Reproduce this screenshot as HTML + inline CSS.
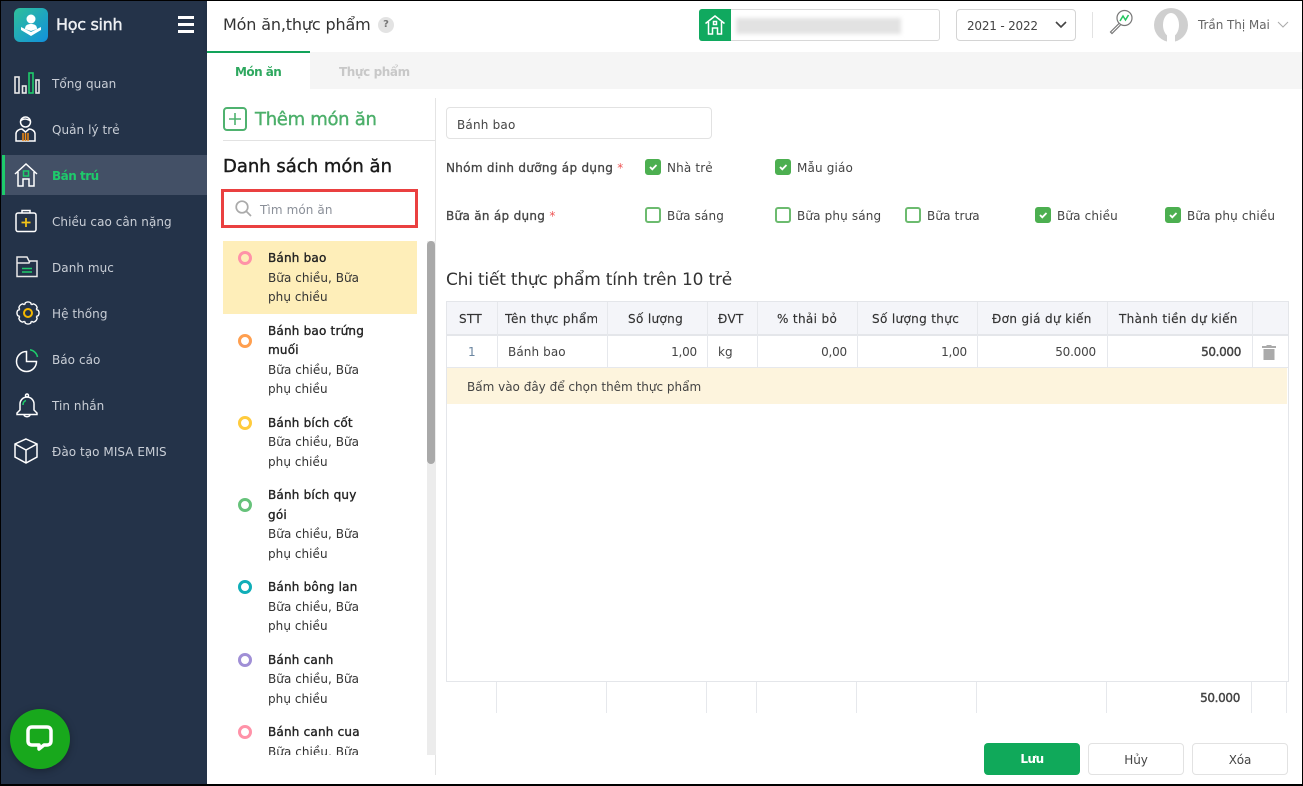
<!DOCTYPE html>
<html lang="vi"><head><meta charset="utf-8"><title>Món ăn, thực phẩm</title>
<style>
*{box-sizing:border-box}
html,body{margin:0;padding:0;width:1303px;height:786px;overflow:hidden;background:#fff}
body{position:relative;font-family:"DejaVu Sans","Liberation Sans",sans-serif;font-size:12px;color:#444}
.a,.t{position:absolute}
.t{white-space:nowrap;line-height:18px;letter-spacing:.1px}
.nav{color:#c9ced6;font-size:12px;letter-spacing:.05px}
.cb{position:absolute;width:16px;height:16px;border-radius:3px;border:2px solid #6cbb6f;background:#fff}
.cb.on{background:#4caf50;border-color:#4caf50}
.cb.on svg{position:absolute;left:1px;top:1px}
.th{color:#333;letter-spacing:.35px;-webkit-text-stroke:.15px #333}
.n{color:#222;font-size:12px;letter-spacing:.2px;-webkit-text-stroke:.35px #222}
.s{color:#333;font-size:12px;letter-spacing:.05px}
.lb{color:#444;letter-spacing:.3px;-webkit-text-stroke:.3px #444}
.b{letter-spacing:-.35px;-webkit-text-stroke:.4px #444;color:#444}
.dot{position:absolute;left:238px;width:14px;height:14px;border-radius:50%;border:3.5px solid}
.v{position:absolute;width:1px;background:#e6e8ec}
svg{position:absolute;overflow:visible}
</style></head><body>

<!-- sidebar -->
<div class="a" style="left:0;top:0;width:207px;height:786px;background:#243349"></div>
<div class="a" style="left:2px;top:155px;width:205px;height:40px;background:#435066"></div>
<div class="a" style="left:2px;top:155px;width:3px;height:40px;background:#1ecb6b"></div>
<div class="a" style="left:14px;top:8px;width:34px;height:34px;border-radius:6px;background:linear-gradient(135deg,#2fc09a,#1190dd)"></div>
<svg style="left:14px;top:8px" width="34" height="34" fill="#fff"><circle cx="17" cy="11" r="4.500"/><path d="M11 21c0-4 3-5 6-5s6 1 6 5l-6 2z"/><path d="M7 19l10 5 10-5v3l-10 6-10-6z"/></svg>
<div class="t" style="left:56px;top:14px;font-size:16px;color:#eef0f3;letter-spacing:-.3px;-webkit-text-stroke:.4px #eef0f3;line-height:22px">Học sinh</div>
<div class="a" style="left:178px;top:16px;width:16px;height:3px;background:#fff"></div>
<div class="a" style="left:178px;top:23px;width:16px;height:3px;background:#fff"></div>
<div class="a" style="left:178px;top:30px;width:16px;height:3px;background:#fff"></div>

<svg style="left:14px;top:73px" width="26" height="22" fill="none" stroke="#e8e8e8" stroke-width="1.600"><rect x="1" y="4" width="4" height="16"/><rect x="8.500" y="13" width="3.500" height="7"/><rect x="15" y="0" width="4" height="20" stroke="#1ecb6b"/><rect x="22" y="7" width="3" height="13"/></svg>
<div class="t nav" style="left:52px;top:75px">Tổng quan</div>

<svg style="left:15px;top:115px" width="22" height="28" fill="none" stroke="#fff" stroke-width="1.500"><circle cx="10.500" cy="7" r="5"/><path d="M5.500 6c3-3 7-2 10 0"/><path d="M1 26V19c0-3 3-5 6-5l3.500 3 3.500-3c3 0 6 2 6 5v7z"/><path d="M8 18v8M13 18v8M10.500 18v8" stroke="#f08a14"/></svg>
<div class="t nav" style="left:52px;top:121px">Quản lý trẻ</div>

<svg style="left:14px;top:163px" width="24" height="24" fill="none" stroke="#fff" stroke-width="1.500"><path d="M1 11L12 1l11 10"/><path d="M4 9v14h5v-7h6v7h5V9"/><rect x="9.500" y="8" width="5" height="5" stroke="#1ecb6b"/></svg>
<div class="t" style="left:52px;top:167px;color:#1ecb6b;font-weight:bold;font-size:12px;letter-spacing:-.5px">Bán trú</div>

<svg style="left:15px;top:209px" width="22" height="24" fill="none" stroke="#fff" stroke-width="1.500"><rect x="1" y="4" width="20" height="18.500" rx="2"/><path d="M7 4V1.500h8V4"/><path d="M6.500 13.500h9M11 9v9" stroke="#f5c518" stroke-width="1.700"/></svg>
<div class="t nav" style="left:52px;top:213px">Chiều cao cân nặng</div>

<svg style="left:16px;top:256px" width="22" height="22" fill="none" stroke="#e8e8e8" stroke-width="1.500"><path d="M1 20.500V1h10l2 4h8v15.500zM1 7h12l1-2"/><path d="M6 12.500h10M6 16h10" stroke="#1ecb6b"/></svg>
<div class="t nav" style="left:52px;top:259px">Danh mục</div>

<svg style="left:16px;top:301px" width="24" height="24" fill="none" stroke="#fff" stroke-width="1.400" stroke-linejoin="round">
<g transform="translate(12 12)">
<path d="M8.310-3.440L10.300-2.600Q11.800 0 10.300 2.600L8.310 3.440"/>
<path transform="rotate(45)" d="M8.310-3.440L10.300-2.600Q11.800 0 10.300 2.600L8.310 3.440"/>
<path transform="rotate(90)" d="M8.310-3.440L10.300-2.600Q11.800 0 10.300 2.600L8.310 3.440"/>
<path transform="rotate(135)" d="M8.310-3.440L10.300-2.600Q11.800 0 10.300 2.600L8.310 3.440"/>
<path transform="rotate(180)" d="M8.310-3.440L10.300-2.600Q11.800 0 10.300 2.600L8.310 3.440"/>
<path transform="rotate(225)" d="M8.310-3.440L10.300-2.600Q11.800 0 10.300 2.600L8.310 3.440"/>
<path transform="rotate(270)" d="M8.310-3.440L10.300-2.600Q11.800 0 10.300 2.600L8.310 3.440"/>
<path transform="rotate(315)" d="M8.310-3.440L10.300-2.600Q11.800 0 10.300 2.600L8.310 3.440"/>
<circle r="4" stroke="#f5b800" stroke-width="2"/>
</g></svg>
<div class="t nav" style="left:52px;top:305px">Hệ thống</div>

<svg style="left:16px;top:349px" width="23" height="23" fill="none" stroke="#fff" stroke-width="1.500"><path d="M10.500 2.500a10 10 0 1 0 10 10h-10z"/><path d="M14 .8a9 9 0 0 1 7.500 7.200" stroke="#1ecb6b"/></svg>
<div class="t nav" style="left:52px;top:351px">Báo cáo</div>

<svg style="left:16px;top:393px" width="23" height="25" fill="none" stroke="#fff" stroke-width="1.500"><circle cx="11" cy="2.500" r="1.500"/><path d="M4 17V11a7 7 0 0 1 14 0v6l3 3v1.500H1V20z"/><path d="M8 21.500c0 3 6 3 6 0"/><path d="M7 12c0-2 1-4 3-4.500" stroke="#1ecb6b"/></svg>
<div class="t nav" style="left:52px;top:397px">Tin nhắn</div>

<svg style="left:14px;top:438px" width="25" height="26" fill="none" stroke="#fff" stroke-width="1.500"><path d="M12 1l11 5v13l-11 6-11-6V6zM1 6l11 6 11-6M12 12v13"/></svg>
<div class="t nav" style="left:52px;top:443px">Đào tạo MISA EMIS</div>

<div class="a" style="left:10px;top:709px;width:60px;height:60px;border-radius:50%;background:#18a81c;box-shadow:0 2px 8px rgba(0,0,0,.3)"></div>
<svg style="left:26px;top:725px" width="28" height="29" fill="none" stroke="#fff" stroke-width="3.500"><path d="M6 2h15c2.500 0 4 1.500 4 4v10c0 2.500-1.500 4-4 4h-3l-5 4v-4H6c-2.500 0-4-1.500-4-4V6c0-2.500 1.500-4 4-4z" stroke-linejoin="round"/></svg>

<!-- header -->
<div class="a" style="left:207px;top:0;width:1096px;height:52px;background:#fff;box-shadow:0 2px 4px rgba(0,0,0,.12)"></div>
<div class="t" style="left:223px;top:14px;font-size:16px;line-height:22px;color:#333;letter-spacing:-.15px">Món ăn,thực phẩm</div>
<div class="a" style="left:378px;top:17px;width:16px;height:16px;border-radius:50%;background:#e3e3e3;color:#777;font-size:10px;line-height:16px;text-align:center;font-weight:bold">?</div>

<div class="a" style="left:699px;top:9px;width:241px;height:32px;border:1px solid #d8d8d8;border-radius:3px;background:#fff"></div>
<div class="a" style="left:699px;top:9px;width:32px;height:32px;background:#10a95f;border-radius:3px 0 0 3px"></div>
<svg style="left:704px;top:14px" width="22" height="22" fill="none" stroke="#fff" stroke-width="1.500"><path d="M1.500 9.500L11 2l9.500 7.500"/><path d="M4.500 8v12h4v-6h5v6h4V8"/><rect x="9.500" y="7.500" width="3" height="3"/></svg>
<div class="a" style="left:736px;top:18px;width:165px;height:16px;background:#e2e2e2;filter:blur(2px)"></div>
<div class="a" style="left:956px;top:9px;width:120px;height:32px;border:1px solid #d4d4d4;border-radius:4px"></div>
<div class="t" style="left:967px;top:17px;color:#444;letter-spacing:-.2px">2021 - 2022</div>
<svg style="left:1055px;top:21px" width="12" height="8" fill="none" stroke="#444" stroke-width="1.600"><path d="M1 1l5 5 5-5"/></svg>
<div class="v" style="left:1092px;top:12px;height:26px;background:#e2e2e2"></div>
<svg style="left:1108px;top:9px" width="26" height="26" fill="none" stroke="#777" stroke-width="1.200"><circle cx="16.500" cy="9" r="7.500"/><path d="M11 14.500L2.500 23l1.500 1.500 8.500-8.500"/><path d="M12 12l3-5 2.500 4 3-5" stroke="#22c55e" stroke-width="1.500"/></svg>
<div class="a" style="left:1154px;top:8px;width:34px;height:34px;border-radius:50%;background:#cfcfcf"></div>
<div class="a" style="left:1163px;top:13px;width:16px;height:24px;border-radius:50%;background:#fff"></div>
<div class="a" style="left:1167px;top:34px;width:8px;height:8px;background:#fff"></div>
<div class="t" style="left:1198px;top:16px;color:#666;letter-spacing:-.05px">Trần Thị Mai</div>
<svg style="left:1277px;top:21px" width="12" height="8" fill="none" stroke="#aaa" stroke-width="1"><path d="M1 1l5 5 5-5"/></svg>

<!-- tabs -->
<div class="a" style="left:207px;top:52px;width:1096px;height:37px;background:#f5f5f5"></div>
<div class="a" style="left:207px;top:51px;width:103px;height:38px;background:#fff;border-top:2px solid #12a35a"></div>
<div class="t" style="left:235px;top:63px;color:#2ea85f;font-weight:bold;letter-spacing:-.55px">Món ăn</div>
<div class="t" style="left:339px;top:63px;color:#c8c8c8;font-weight:bold;letter-spacing:-.4px">Thực phẩm</div>

<!-- left panel -->
<div class="v" style="left:435px;top:98px;height:677px;background:#e4e4e4"></div>
<div class="a" style="left:223px;top:107px;width:24px;height:24px;border:2px solid #4fb26f;border-radius:4px"></div>
<svg style="left:223px;top:107px" width="24" height="24" stroke="#4fb26f" stroke-width="1.600"><path d="M12 6v12M6 12h12"/></svg>
<div class="t" style="left:255px;top:108px;font-size:18px;line-height:24px;color:#4caf6a;letter-spacing:-.3px;-webkit-text-stroke:.4px #4caf6a">Thêm món ăn</div>
<div class="a" style="left:223px;top:140px;width:212px;height:1px;background:#e2e2e2"></div>
<div class="t" style="left:223px;top:155px;font-size:18px;line-height:24px;color:#1a1a1a;letter-spacing:0;-webkit-text-stroke:.4px #1a1a1a">Danh sách món ăn</div>
<div class="a" style="left:221px;top:189px;width:197px;height:39px;border:3px solid #ea4040;background:#fff"></div>
<svg style="left:235px;top:200px" width="17" height="17" fill="none" stroke="#aaa" stroke-width="1.700"><circle cx="7" cy="7" r="5.800"/><path d="M11.500 11.500L16 16"/></svg>
<div class="t" style="left:260px;top:201px;color:#8a8f98;letter-spacing:.1px">Tìm món ăn</div>

<div class="a" style="left:223px;top:241px;width:194px;height:73px;background:#feeeb9"></div>
<div class="a" style="left:427px;top:241px;width:9px;height:514px;background:#ececec"></div>
<div class="a" style="left:427px;top:241px;width:8px;height:223px;background:#a9a9a9;border-radius:4px"></div>

<div class="dot" style="top:251px;border-color:#ff92a8"></div>
<div class="t n" style="left:268px;top:249px">Bánh bao</div>
<div class="t s" style="left:268px;top:269px">Bữa chiều, Bữa</div>
<div class="t s" style="left:268px;top:288px">phụ chiều</div>

<div class="dot" style="top:334px;border-color:#ff9f4f"></div>
<div class="t n" style="left:268px;top:322px">Bánh bao trứng</div>
<div class="t n" style="left:268px;top:341px">muối</div>
<div class="t s" style="left:268px;top:361px">Bữa chiều, Bữa</div>
<div class="t s" style="left:268px;top:380px">phụ chiều</div>

<div class="dot" style="top:416px;border-color:#ffcb3d"></div>
<div class="t n" style="left:268px;top:414px">Bánh bích cốt</div>
<div class="t s" style="left:268px;top:433px">Bữa chiều, Bữa</div>
<div class="t s" style="left:268px;top:453px">phụ chiều</div>

<div class="dot" style="top:498px;border-color:#66c27a"></div>
<div class="t n" style="left:268px;top:486px">Bánh bích quy</div>
<div class="t n" style="left:268px;top:506px">gói</div>
<div class="t s" style="left:268px;top:525px">Bữa chiều, Bữa</div>
<div class="t s" style="left:268px;top:545px">phụ chiều</div>

<div class="dot" style="top:580px;border-color:#10aeb8"></div>
<div class="t n" style="left:268px;top:578px">Bánh bông lan</div>
<div class="t s" style="left:268px;top:598px">Bữa chiều, Bữa</div>
<div class="t s" style="left:268px;top:617px">phụ chiều</div>

<div class="dot" style="top:653px;border-color:#a08fd6"></div>
<div class="t n" style="left:268px;top:651px">Bánh canh</div>
<div class="t s" style="left:268px;top:670px">Bữa chiều, Bữa</div>
<div class="t s" style="left:268px;top:690px">phụ chiều</div>

<div class="dot" style="top:725px;border-color:#ff92a8"></div>
<div class="t n" style="left:268px;top:723px">Bánh canh cua</div>
<div class="a" style="left:268px;top:743px;width:120px;height:12px;overflow:hidden"><div class="t s" style="left:0;top:0">Bữa chiều, Bữa</div></div>

<!-- form -->
<div class="a" style="left:446px;top:107px;width:266px;height:32px;border:1px solid #e2e2e2;border-radius:4px"></div>
<div class="t" style="left:457px;top:116px;color:#444;letter-spacing:.2px">Bánh bao</div>
<div class="t lb" style="left:446px;top:159px">Nhóm dinh dưỡng áp dụng <span style="color:#e55;-webkit-text-stroke:0">*</span></div>
<div class="t lb" style="left:446px;top:207px">Bữa ăn áp dụng <span style="color:#e55;-webkit-text-stroke:0">*</span></div>

<div class="cb on" style="left:645px;top:159px"><svg width="10" height="10" fill="none" stroke="#fff" stroke-width="1.800"><path d="M2 5l2.300 2.300L8.500 3"/></svg></div>
<div class="t" style="left:667px;top:159px;letter-spacing:.15px">Nhà trẻ</div>
<div class="cb on" style="left:775px;top:159px"><svg width="10" height="10" fill="none" stroke="#fff" stroke-width="1.800"><path d="M2 5l2.300 2.300L8.500 3"/></svg></div>
<div class="t" style="left:797px;top:159px;letter-spacing:.15px">Mẫu giáo</div>

<div class="cb" style="left:645px;top:207px"></div>
<div class="t" style="left:667px;top:207px;letter-spacing:.15px">Bữa sáng</div>
<div class="cb" style="left:775px;top:207px"></div>
<div class="t" style="left:797px;top:207px;letter-spacing:.15px">Bữa phụ sáng</div>
<div class="cb" style="left:905px;top:207px"></div>
<div class="t" style="left:927px;top:207px;letter-spacing:.15px">Bữa trưa</div>
<div class="cb on" style="left:1035px;top:207px"><svg width="10" height="10" fill="none" stroke="#fff" stroke-width="1.800"><path d="M2 5l2.300 2.300L8.500 3"/></svg></div>
<div class="t" style="left:1057px;top:207px;letter-spacing:.15px">Bữa chiều</div>
<div class="cb on" style="left:1165px;top:207px"><svg width="10" height="10" fill="none" stroke="#fff" stroke-width="1.800"><path d="M2 5l2.300 2.300L8.500 3"/></svg></div>
<div class="t" style="left:1187px;top:207px;letter-spacing:.15px">Bữa phụ chiều</div>

<div class="t" style="left:446px;top:268px;font-size:17px;line-height:24px;color:#333;letter-spacing:-.2px">Chi tiết thực phẩm tính trên 10 trẻ</div>

<!-- table -->
<div class="a" style="left:446px;top:301px;width:843px;height:381px;border:1px solid #e4e6ea;background:#fff"></div>
<div class="a" style="left:447px;top:302px;width:841px;height:32px;background:#f4f5f9"></div>
<div class="a" style="left:447px;top:334px;width:841px;height:2px;background:#e4e6ea"></div>
<div class="a" style="left:447px;top:367px;width:841px;height:1px;background:#e6e8ec"></div>
<div class="a" style="left:447px;top:368px;width:840px;height:36px;background:#fdf4dd"></div>
<div class="v" style="left:497px;top:302px;height:65px"></div>
<div class="v" style="left:607px;top:302px;height:65px"></div>
<div class="v" style="left:707px;top:302px;height:65px"></div>
<div class="v" style="left:757px;top:302px;height:65px"></div>
<div class="v" style="left:857px;top:302px;height:65px"></div>
<div class="v" style="left:977px;top:302px;height:65px"></div>
<div class="v" style="left:1107px;top:302px;height:65px"></div>
<div class="v" style="left:1252px;top:302px;height:65px"></div>

<div class="t th" style="left:459px;top:310px">STT</div>
<div class="a" style="left:505px;top:310px;width:92px;height:18px;overflow:hidden"><div class="t th" style="left:0;top:0">Tên thực phẩm</div></div>
<div class="t th" style="left:628px;top:310px">Số lượng</div>
<div class="t th" style="left:718px;top:310px">ĐVT</div>
<div class="t th" style="left:777px;top:310px">% thải bỏ</div>
<div class="t th" style="left:872px;top:310px">Số lượng thực</div>
<div class="t th" style="left:992px;top:310px">Đơn giá dự kiến</div>
<div class="t th" style="left:1119px;top:310px">Thành tiền dự kiến</div>

<div class="t" style="left:468px;top:343px;color:#6b86a0">1</div>
<div class="t" style="left:508px;top:343px;letter-spacing:.1px">Bánh bao</div>
<div class="t" style="right:606px;top:343px;letter-spacing:-.2px">1,00</div>
<div class="t" style="left:718px;top:343px">kg</div>
<div class="t" style="right:456px;top:343px;letter-spacing:-.2px">0,00</div>
<div class="t" style="right:336px;top:343px;letter-spacing:-.2px">1,00</div>
<div class="t" style="right:207px;top:343px;letter-spacing:-.2px">50.000</div>
<div class="t b" style="right:62px;top:343px">50.000</div>
<svg style="left:1262px;top:345px" width="14" height="15" fill="#aaa"><rect x="0" y="1" width="14" height="2"/><rect x="4.500" y="0" width="5" height="1.500"/><path d="M1.500 4h11v11h-11z"/></svg>

<div class="t" style="left:467px;top:378px;color:#444;letter-spacing:0">Bấm vào đây để chọn thêm thực phẩm</div>

<div class="v" style="left:496px;top:682px;height:31px"></div>
<div class="v" style="left:606px;top:682px;height:31px"></div>
<div class="v" style="left:706px;top:682px;height:31px"></div>
<div class="v" style="left:756px;top:682px;height:31px"></div>
<div class="v" style="left:856px;top:682px;height:31px"></div>
<div class="v" style="left:976px;top:682px;height:31px"></div>
<div class="v" style="left:1106px;top:682px;height:31px"></div>
<div class="v" style="left:1251px;top:682px;height:31px"></div>
<div class="v" style="left:1286px;top:682px;height:31px"></div>
<div class="t b" style="right:63px;top:689px">50.000</div>

<!-- buttons -->
<div class="a" style="left:984px;top:743px;width:96px;height:32px;border-radius:4px;background:#10a95a;color:#fff;font-weight:bold;text-align:center;line-height:33px;letter-spacing:-.5px">Lưu</div>
<div class="a" style="left:1088px;top:743px;width:96px;height:32px;border-radius:4px;border:1px solid #e2e2e2;background:#fff;text-align:center;line-height:32px;letter-spacing:-.1px">Hủy</div>
<div class="a" style="left:1192px;top:743px;width:96px;height:32px;border-radius:4px;border:1px solid #e2e2e2;background:#fff;text-align:center;line-height:32px;letter-spacing:-.1px">Xóa</div>

<!-- frame -->
<div class="a" style="left:0;top:0;width:1303px;height:1px;background:#000"></div>
<div class="a" style="left:0;top:784px;width:1303px;height:2px;background:#000"></div>
<div class="a" style="left:0;top:0;width:1px;height:786px;background:#000"></div>
<div class="a" style="left:1302px;top:0;width:1px;height:786px;background:#000"></div>
</body></html>
